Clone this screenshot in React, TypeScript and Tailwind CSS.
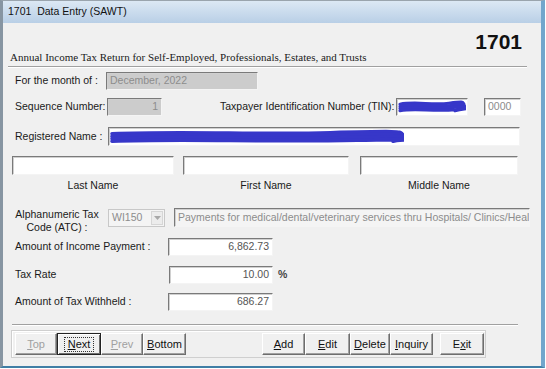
import type { ReactNode } from 'react';

const sunken = 'border border-t-[#7a7a7a] border-l-[#7a7a7a] border-b-[#f4f4f4] border-r-[#f4f4f4] shadow-[inset_1px_1px_0_#d0d0d0]';
const raised = 'border border-t-[#ffffff] border-l-[#ffffff] border-b-[#6d6d6d] border-r-[#6d6d6d] shadow-[inset_-1px_-1px_0_#a0a0a0]';

function Field({ className, children }: { className: string; children?: ReactNode }) {
  return <div className={`${sunken} relative flex items-center overflow-hidden px-[3px] text-[10.5px] ${className}`}>{children}</div>;
}

function Scribble({ w, h }: { w: number; h: number }) {
  // rough marker strokes over the redacted value
  const rows = [0.25, 0.42, 0.58, 0.75];
  return (
    <svg className="absolute left-[1px] top-[1px]" width={w} height={h} viewBox={`0 0 ${w} ${h}`}>
      {rows.map((r, i) => (
        <path
          key={i}
          d={`M2 ${h * r + 1} C ${w * 0.25} ${h * r - 2}, ${w * 0.5} ${h * r + 2}, ${w * (0.75 + i * 0.03)} ${h * r} S ${w - 4} ${h * r - 1}, ${w - 2 - i * 3} ${h * r + 1}`}
          stroke="#3737c9"
          strokeWidth={h * 0.24}
          strokeLinecap="round"
          fill="none"
        />
      ))}
    </svg>
  );
}

function Btn({ label, u, disabled, focus, className }: { label: string; u: number; disabled?: boolean; focus?: boolean; className: string }) {
  const text = (
    <span>
      {label.slice(0, u)}
      <span className="underline underline-offset-[1px]">{label[u]}</span>
      {label.slice(u + 1)}
    </span>
  );
  return (
    <div
      className={`flex h-[22px] items-center justify-center text-[11px] ${className} ${
        focus ? 'border border-[#222] shadow-[inset_1px_1px_0_#fff,inset_-1px_-1px_0_#6d6d6d]' : raised
      } ${disabled ? 'text-[#a0a0a0]' : 'text-[#111]'}`}
    >
      {focus ? <span className="border border-dotted border-[#333] px-[3px] leading-[13px]">{text}</span> : text}
    </div>
  );
}

function Sep({ className }: { className: string }) {
  return <div className={`h-[2px] border-t border-t-[#a0a0a0] border-b border-b-white ${className}`} />;
}

export default function App() {
  return (
    <div className="h-[369px] w-[546px] overflow-hidden bg-white font-['Liberation_Sans',Arial,sans-serif] text-[#1a1a1a]">
      <div className="flex h-[368px] w-[545px] flex-col border-t border-t-[#9aa4ad] border-l-[3px] border-l-[#8795a2] border-r-[4px] border-r-[#72a6cc] border-b-[2px] border-b-[#3f7ea5]">
        <div className="flex h-[22px] shrink-0 items-center bg-gradient-to-b from-[#dce8f4] to-[#b9cfe6] pl-[5px] text-[10.5px] text-[#111]">
          1701&nbsp; Data Entry (SAWT)
        </div>
        <div className="flex flex-1 flex-col bg-[#f0f0f0] text-[10.5px]">
          <div className="flex h-[43px] justify-between pl-[7px] pr-[19px]">
            <span className="mt-[28px] font-['Liberation_Serif',serif] text-[11px] leading-[13px]">
              Annual Income Tax Return for Self-Employed, Professionals, Estates, and Trusts
            </span>
            <span className="mt-[7px] text-[21px] font-bold leading-[24px] text-[#111]">1701</span>
          </div>
          <Sep className="ml-[5px] w-[519px]" />

          <div className="mt-[4px] flex h-[18px] items-center pl-[12px]">
            <span className="w-[91px]">For the month of :</span>
            <Field className="h-[18px] w-[152px] bg-[#cccccc] text-[#8c8c8c]">December, 2022</Field>
          </div>

          <div className="mt-[8px] flex h-[18px] items-center pl-[12px]">
            <span className="w-[92px]">Sequence Number:</span>
            <Field className="h-[18px] w-[55px] justify-end bg-[#cccccc] text-[#8c8c8c]">1</Field>
            <span className="ml-[58px] w-[176px]">Taxpayer Identification Number (TIN):</span>
            <Field className="h-[18px] w-[72px] bg-white">
              <Scribble w={68} h={13} />
            </Field>
            <Field className="ml-[16px] h-[18px] w-[37px] bg-white text-[#8c8c8c]">0000</Field>
          </div>

          <div className="mt-[11px] flex h-[19px] items-center pl-[12px]">
            <span className="w-[93px]">Registered Name :</span>
            <Field className="h-[19px] w-[412px] bg-white">
              <Scribble w={294} h={15} />
            </Field>
          </div>

          <div className="mt-[10px] flex h-[19px] items-center pl-[9px]">
            <Field className="h-[19px] w-[162px] bg-white" />
            <Field className="ml-[9px] h-[19px] w-[166px] bg-white" />
            <Field className="ml-[11px] h-[19px] w-[158px] bg-white" />
          </div>
          <div className="mt-[4px] flex h-[13px] items-center pl-[9px] leading-[13px]">
            <span className="w-[162px] text-center">Last Name</span>
            <span className="ml-[9px] w-[166px] text-center">First Name</span>
            <span className="ml-[11px] w-[158px] text-center">Middle Name</span>
          </div>

          <div className="mt-[16px] flex h-[26px] items-start pl-[11px]">
            <span className="w-[86px] whitespace-nowrap text-center leading-[13px]">
              Alphanumeric Tax
              <br />
              Code (ATC) :
            </span>
            <div className="ml-[8px] mt-[1px] flex h-[18px] w-[57px] items-center justify-between border border-[#c8c8c8] bg-[#f4f4f4] pl-[3px] pr-[1px] text-[#8c8c8c]">
              <span>WI150</span>
              <span className="flex h-[14px] w-[12px] items-center justify-center border border-[#d6d6d6] bg-[#ececec]">
                <svg width="7" height="4" viewBox="0 0 7 4">
                  <path d="M0 0 L7 0 L3.5 4 Z" fill="#a8a8a8" />
                </svg>
              </span>
            </div>
            <Field className="ml-[9px] h-[19px] w-[356px] whitespace-nowrap bg-[#f4f4f4] text-[#8c8c8c]">
              Payments for medical/dental/veterinary services thru Hospitals/ Clinics/Health
            </Field>
          </div>

          <div className="mt-[4px] flex h-[18px] items-center pl-[12px]">
            <span className="w-[153px]">Amount of Income Payment :</span>
            <Field className="h-[18px] w-[105px] justify-end bg-white text-[#555]">6,862.73</Field>
          </div>

          <div className="mt-[10px] flex h-[18px] items-center pl-[12px]">
            <span className="w-[154px]">Tax Rate</span>
            <Field className="h-[18px] w-[104px] justify-end bg-white text-[#555]">10.00</Field>
            <span className="ml-[5px] font-bold text-[#444]">%</span>
          </div>

          <div className="mt-[9px] flex h-[18px] items-center pl-[12px]">
            <span className="w-[153px]">Amount of Tax Withheld :</span>
            <Field className="h-[18px] w-[105px] justify-end bg-white text-[#555]">686.27</Field>
          </div>

          <Sep className="ml-[9px] mt-[13px] w-[506px]" />

          <div className="ml-[8px] mt-[4px] flex h-[28px] w-[475px] items-center border border-[#cfcfcf] pl-[3px] shadow-[inset_1px_1px_0_#fff]">
            <Btn label="Top" u={0} disabled className="w-[42px]" />
            <Btn label="Next" u={0} focus className="w-[44px]" />
            <Btn label="Prev" u={0} disabled className="w-[42px]" />
            <Btn label="Bottom" u={0} className="w-[43px]" />
            <Btn label="Add" u={0} className="ml-[76px] w-[43px]" />
            <Btn label="Edit" u={0} className="w-[45px]" />
            <Btn label="Delete" u={0} className="w-[40px]" />
            <Btn label="Inquiry" u={0} className="w-[43px]" />
            <Btn label="Exit" u={1} className="ml-[7px] w-[44px]" />
          </div>
        </div>
      </div>
    </div>
  );
}
